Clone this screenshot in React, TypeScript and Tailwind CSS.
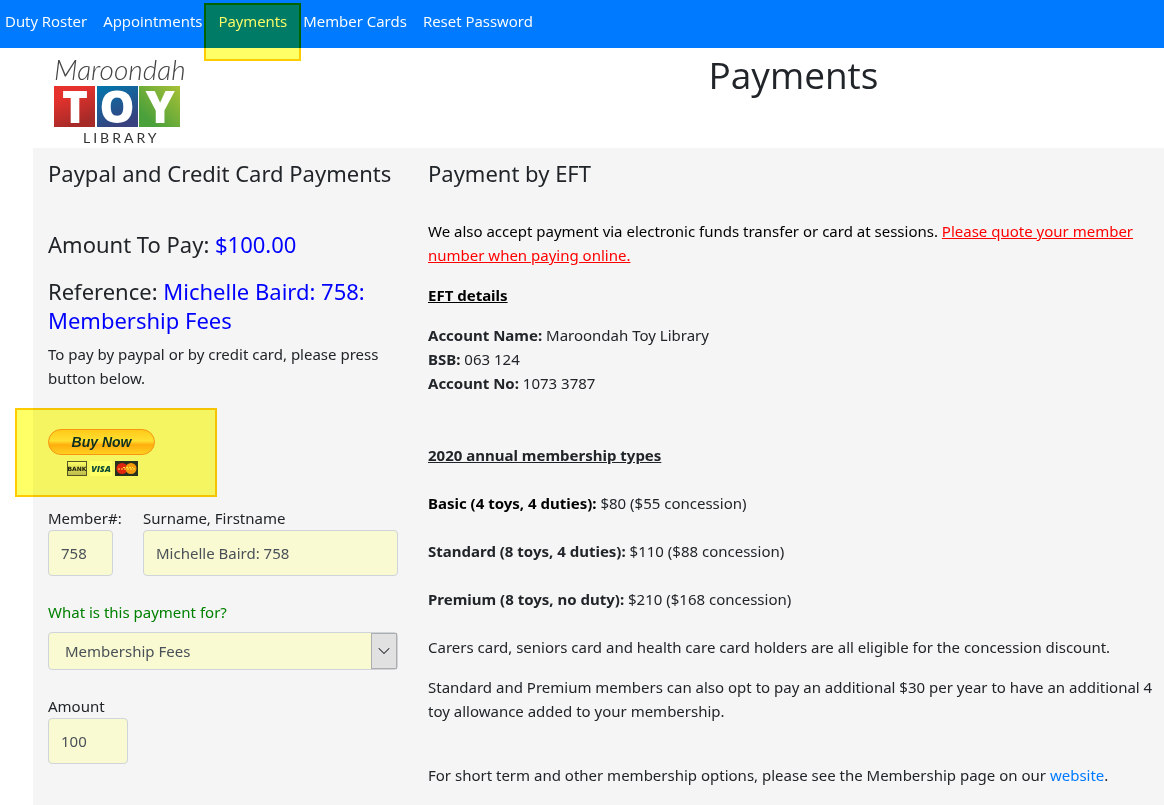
import React, { useState } from 'react';
import { ChevronDown } from 'lucide-react';

const navLinks = ['Duty Roster', 'Appointments', 'Payments', 'Member Cards', 'Reset Password'];

const memberships = [
  { name: 'Basic (4 toys, 4 duties):', price: '$80 ($55 concession)', color: 'text-black' },
  { name: 'Standard (8 toys, 4 duties):', price: '$110 ($88 concession)', color: '' },
  { name: 'Premium (8 toys, no duty):', price: '$210 ($168 concession)', color: '' },
];

const headingClass = 'text-[22px] leading-[29px]';

const fieldClass =
  'block w-full rounded-sm border border-[#ced4da] bg-[#fafad2] text-[#495057] outline-none focus:border-[#80bdff]';

function Highlight({ className }: { className: string }) {
  return (
    <span
      aria-hidden="true"
      className={`pointer-events-none absolute border-2 border-[#ffcc00] bg-[#ffff66] mix-blend-multiply ${className}`}
    />
  );
}

function Logo() {
  return (
    <svg width="144" height="94" viewBox="0 0 144 94" role="img" aria-label="Maroondah Toy Library">
      <defs>
        <linearGradient id="red" x1="0" y1="0" x2="0.4" y2="1">
          <stop offset="0.3" stopColor="#e5322d" />
          <stop offset="1" stopColor="#a52a28" />
        </linearGradient>
        <linearGradient id="blue" x1="0" y1="0" x2="0.4" y2="1">
          <stop offset="0" stopColor="#0077ae" />
          <stop offset="1" stopColor="#37427e" />
        </linearGradient>
        <linearGradient id="green" x1="0" y1="1" x2="1" y2="0">
          <stop offset="0.2" stopColor="#4aa03b" />
          <stop offset="1" stopColor="#a9c136" />
        </linearGradient>
      </defs>
      <rect x="3" y="34" width="41" height="41" fill="url(#red)" />
      <rect x="46" y="34" width="41" height="41" fill="url(#blue)" />
      <rect x="88" y="34" width="41" height="41" fill="url(#green)" />
      <g fontFamily="'Open Sans', sans-serif" fontWeight="800" fontSize="44" fill="#fff" textAnchor="middle">
        <text x="24" y="71">T</text>
        <text x="66" y="71">O</text>
        <text x="109" y="71">Y</text>
      </g>
      <text x="3" y="28" fontFamily="Lato, sans-serif" fontStyle="italic" fontWeight="300" fontSize="28" fill="#444">
        Maroondah
      </text>
      <text x="32" y="91" fontFamily="Lato, sans-serif" fontSize="14" letterSpacing="3" fill="#333">
        LIBRARY
      </text>
    </svg>
  );
}

function CardLogos() {
  return (
    <svg width="73" height="15" viewBox="0 0 73 15" role="img" aria-label="Bank, Visa, MasterCard">
      <defs>
        <linearGradient id="bank" x1="0" y1="0" x2="0" y2="1">
          <stop offset="0" stopColor="#fff" />
          <stop offset="1" stopColor="#b8b8b8" />
        </linearGradient>
      </defs>
      <rect x="1.5" y="0.5" width="19" height="14" fill="url(#bank)" stroke="#555" />
      <text x="11" y="10" textAnchor="middle" fontFamily="'DejaVu Sans', sans-serif" fontWeight="700" fontSize="6" fill="#222">
        BANK
      </text>
      <rect x="24" y="0" width="22" height="15" fill="#fff" />
      <text x="35" y="11" textAnchor="middle" fontFamily="'Open Sans', sans-serif" fontWeight="800" fontStyle="italic" fontSize="9" fill="#0b4a85">
        VISA
      </text>
      <rect x="49" y="0" width="23" height="15" fill="#28304a" />
      <circle cx="56" cy="7.5" r="5.5" fill="#e0261f" />
      <circle cx="65" cy="7.5" r="5.5" fill="#f29a1c" />
      <path d="M52 8h17M57 6.5h10" stroke="#ffe9a0" strokeWidth="1" strokeDasharray="2 1" />
    </svg>
  );
}

export default function App() {
  const [paymentFor, setPaymentFor] = useState('Membership Fees');
  const [amount, setAmount] = useState('100');

  return (
    <div className="flex min-h-screen flex-col bg-white font-['Noto_Sans','Segoe_UI',sans-serif] text-[15px] leading-6 text-[#212529]">
      <nav className="flex h-12 items-start gap-4 bg-[#007bff] px-[5px] pt-[9px] font-['Open_Sans','Segoe_UI',sans-serif] text-white">
        {navLinks.map((link) => (
          <a key={link} href="#" className="relative whitespace-nowrap">
            {link}
            {link === 'Payments' && <Highlight className="-inset-x-[14px] -top-[6px] h-[58px]" />}
          </a>
        ))}
      </nav>

      <header className="grid h-[100px] grid-cols-[380px_1fr] pl-[33px] font-['Open_Sans','Segoe_UI',sans-serif]">
        <div className="px-[18px] pt-[4px]">
          <Logo />
        </div>
        <h1 className="pr-[5px] pl-[15px] pt-[3px] text-center text-[37px] leading-12">Payments</h1>
      </header>

      <main className="ml-[33px] grid flex-1 grid-cols-[380px_1fr] bg-[#f5f5f5] pt-[11px] pb-4">
        <section className="px-[15px]">
          <h4 className={`${headingClass} whitespace-nowrap`}>Paypal and Credit Card Payments</h4>
          <h4 className={`${headingClass} mt-[42px]`}>
            Amount To Pay: <span className="text-[#0000ff]">$100.00</span>
          </h4>
          <h4 className={`${headingClass} mt-[18px]`}>
            Reference: <span className="text-[#0000ff]">Michelle Baird: 758: Membership Fees</span>
          </h4>
          <p className="mt-[7px]">To pay by paypal or by credit card, please press button below.</p>

          <div className="relative mt-[39px] w-[107px]">
            <button
              type="button"
              className="block h-[26px] w-full rounded-full border border-[#f79428] bg-[linear-gradient(to_bottom,#ffc93c,#ffe07a_45%,#ffad1f_62%,#ffd050)] font-['Liberation_Sans',sans-serif] text-[14px] leading-6 font-bold text-[#0d2f50] italic"
            >
              Buy Now
            </button>
            <div className="mt-[6px] pl-[18px]">
              <CardLogos />
            </div>
            <Highlight className="-top-[21px] -left-[33px] h-[89px] w-[202px]" />
          </div>

          <form className="mt-[30px]" onSubmit={(e) => e.preventDefault()}>
            <div className="flex gap-[30px]">
              <div className="w-[65px]">
                <label htmlFor="member" className="block whitespace-nowrap">Member#:</label>
                <input id="member" className={`${fieldClass} h-[46px] px-3`} defaultValue="758" readOnly />
              </div>
              <div className="flex-1">
                <label htmlFor="fullname" className="block">Surname, Firstname</label>
                <input id="fullname" className={`${fieldClass} h-[46px] px-3`} defaultValue="Michelle Baird: 758" readOnly />
              </div>
            </div>

            <label htmlFor="payment" className="mt-6 mb-2 block text-[#008000]">What is this payment for?</label>
            <div className="relative">
              <select
                id="payment"
                value={paymentFor}
                onChange={(e) => setPaymentFor(e.target.value)}
                className={`${fieldClass} h-[38px] appearance-none px-4`}
              >
                <option>Membership Fees</option>
              </select>
              <span className="pointer-events-none absolute inset-y-px right-px flex w-[26px] items-center justify-center border border-[#adadad] bg-[#e1e1e1]">
                <ChevronDown size={20} strokeWidth={1.25} />
              </span>
            </div>

            <label htmlFor="amount" className="mt-6 block">Amount</label>
            <div className="w-20">
              <input
                id="amount"
                value={amount}
                onChange={(e) => setAmount(e.target.value)}
                className={`${fieldClass} h-[46px] px-3`}
              />
            </div>
          </form>
        </section>

        <section className="pr-[5px] pl-[15px]">
          <h4 className={headingClass}>Payment by EFT</h4>
          <p className="mt-[31px] text-black">
            We also accept payment via electronic funds transfer or card at sessions.{' '}
            <span className="text-[#ff0000] underline">Please quote your member number when paying online.</span>
          </p>
          <p className="mt-4 font-bold text-black underline">EFT details</p>
          <p className="mt-4">
            <strong>Account Name:</strong> Maroondah Toy Library
            <br />
            <strong>BSB:</strong> 063 124
            <br />
            <strong>Account No:</strong> 1073 3787
          </p>

          <p className="mt-12 font-bold underline">2020 annual membership types</p>
          {memberships.map((m) => (
            <p key={m.name} className="mt-6">
              <strong className={m.color}>{m.name}</strong> {m.price}
            </p>
          ))}
          <p className="mt-6">
            Carers card, seniors card and health care card holders are all eligible for the concession discount.
          </p>
          <p className="mt-4">
            Standard and Premium members can also opt to pay an additional $30 per year to have an additional 4 toy
            allowance added to your membership.
          </p>
          <p className="mt-10">
            For short term and other membership options, please see the Membership page on our{' '}
            <a href="#" className="text-[#007bff]">website</a>.
          </p>
        </section>
      </main>
    </div>
  );
}
